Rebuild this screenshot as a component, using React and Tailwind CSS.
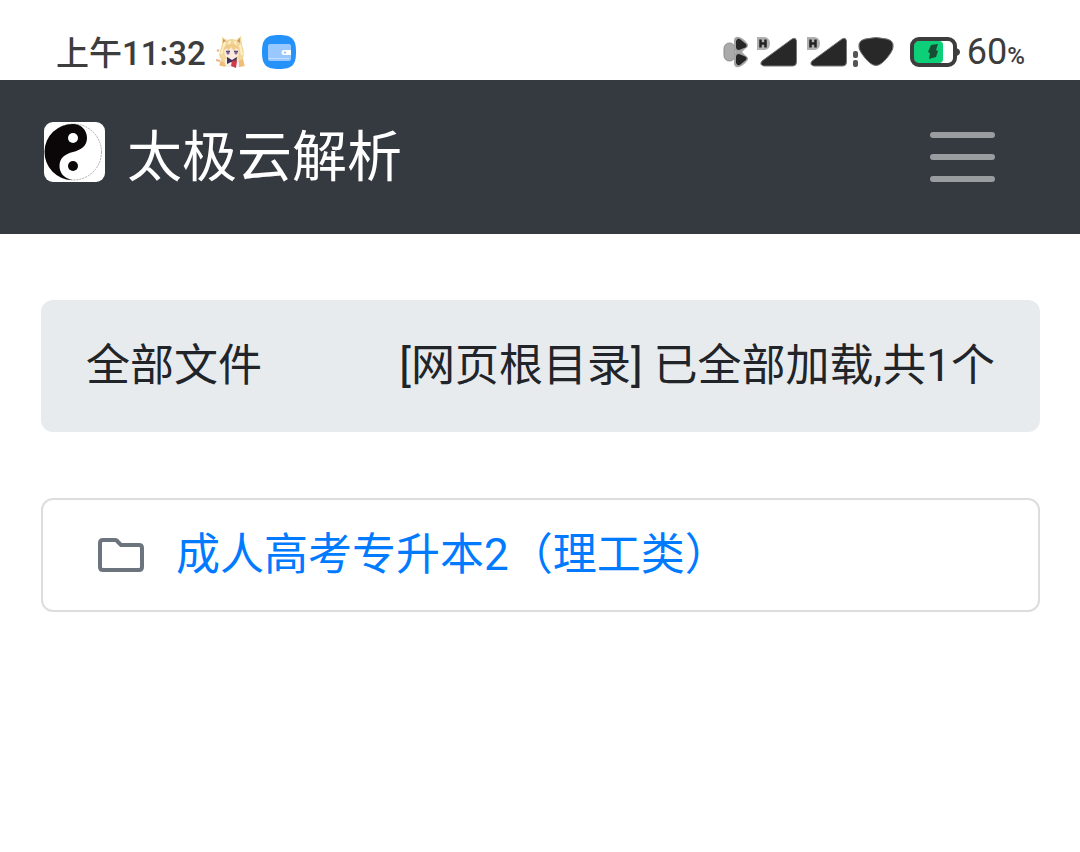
import { useState } from "react";

const files = [{ id: 1, name: "成人高考专升本2（理工类）" }];

function AvatarIcon() {
  return (
    <svg viewBox="0 0 30 34" className="w-[30px] h-[34px]" aria-hidden="true">
      <path d="M6 9 6 2 11 5Q16 3 20 5L25 1 26 10Q29 17 27 24L29 31 22 32 8 32 3 30 5 24Q2 22 4 16Z" fill="#f3d69c" />
      <path d="M7 8 7 4 10 6ZM24 8 24 3 21 6Z" fill="#c79a63" />
      <path d="M9 7Q8 13 5 19M14 6 12 12M19 6 20 12M24 10 26 20" stroke="#fff0c6" strokeWidth="2" fill="none" />
      <path d="M8 14Q15 10 23 14L22 21Q15 26 9 21Z" fill="#fdeade" />
      <path d="M7 16Q8 9 15 9Q22 8 24 16L20 13 18 16 15 12 12 16 11 13Z" fill="#f1cc88" />
      <path d="M10 16.5h4M18 16.5h4" stroke="#4d4168" strokeWidth="1.5" />
      <circle cx="12" cy="18" r="1.5" fill="#7c6b9c" />
      <circle cx="20" cy="18" r="1.5" fill="#7c6b9c" />
      <path d="M9 24 15 23 22 24 24 32 9 32Z" fill="#f5efef" />
      <path d="M11 22 16 25 21 22 20 29 15 27 11 29Z" fill="#3d315c" />
      <path d="M16 26 21 25 20 33 15 31Z" fill="#d03b49" />
      <path d="M1 15 3 16M0 25 4 26" stroke="#e6b48a" strokeWidth="2" />
      <path d="M4 27Q8 25 10 31L4 31ZM23 26 27 24 28 31 23 32Z" fill="#edbd79" />
    </svg>
  );
}

function WalletIcon() {
  return (
    <svg viewBox="0 0 34 34" className="w-[34px] h-[34px]" aria-hidden="true">
      <path d="M17 0C30 0 34 4 34 17S30 34 17 34 0 30 0 17 4 0 17 0Z" fill="#2492f8" />
      <rect x="6" y="9" width="23" height="17" rx="2" fill="#99c8ff" />
      <path d="M7 23.5h20" stroke="#c3dfff" strokeWidth="1" />
      <path d="M22 15h7v5h-7a2.5 2.5 0 0 1 0-5Z" fill="#fff" />
      <circle cx="23" cy="17.5" r="1" fill="#73b3f8" />
    </svg>
  );
}

function BluetoothIcon() {
  return (
    <svg viewBox="0 0 26 32" className="w-[26px] h-8" aria-hidden="true">
      <rect x="1" y="7" width="11" height="18" rx="5.5" fill="#aaa" stroke="#8c8c8c" />
      <path d="M11 4Q12 0 16 1Q20 2 24 7Q27 10 22 13L19 16 22 19Q27 22 24 25Q20 30 16 31Q12 32 11 28V19L13 16 11 13Z" fill="#a3a3a3" />
      <path d="M13 5Q15 1 18 4L23 8Q25 11 21 12L16 14Q13 14 13 11Z" fill="#262626" />
      <path d="M13 27Q15 31 18 28L23 24Q25 21 21 20L16 18Q13 18 13 21Z" fill="#262626" />
    </svg>
  );
}

function SignalIcon() {
  return (
    <svg viewBox="0 0 42 32" className="w-[42px] h-8" aria-hidden="true">
      <path d="M1 1h8q5 1 5 6.5t-5 6.5H1Z" fill="#b0b0b0" />
      <path d="M4.5 3.5v8M9.5 3.5v8M4.5 7.5h5" stroke="#222" strokeWidth="2.5" fill="none" />
      <path d="M36 3Q40 1 40.5 5V26Q40.5 30 37 30H8Q3 29 6 25Z" fill="#282828" stroke="#777" strokeWidth="1" />
    </svg>
  );
}

function WifiIcon() {
  return (
    <svg viewBox="0 0 42 32" className="w-[42px] h-8" aria-hidden="true">
      <rect x="1" y="15" width="5" height="7" rx="2" fill="#555" />
      <rect x="1" y="24" width="5" height="7" rx="2" fill="#555" />
      <path d="M7 8Q8 4 13 3Q24 0 35 3Q40 4 41 8Q42 13 38 18Q34 24 30 27Q24 32 18 27Q14 24 10 18Q6 13 7 8Z" fill="#282828" stroke="#777" strokeWidth="1" />
    </svg>
  );
}

function BatteryIcon() {
  return (
    <svg viewBox="0 0 50 30" className="w-[50px] h-[30px]" aria-hidden="true">
      <rect x="2" y="2" width="43" height="26" rx="7" fill="#fff" />
      <path d="M8 4H29Q33 4 33 8V22Q33 26 29 26H8Q4 26 4 22V8Q4 4 8 4Z" fill="#0ccf78" />
      <rect x="2" y="2" width="43" height="26" rx="7" fill="none" stroke="#3d3d3d" strokeWidth="4" />
      <path d="M46 11q4 1 4 4t-4 4Z" fill="#3d3d3d" />
      <path d="M21 8 28 7 26 13 28 14 26 20 19 22 20 16 18 15Z" fill="#174d35" />
    </svg>
  );
}

function TaijiLogo() {
  return (
    <svg viewBox="0 0 61 60" className="w-[61px] h-[60px]" aria-hidden="true">
      <rect width="61" height="60" rx="9" fill="#fff" />
      <circle cx="29.5" cy="30" r="28" fill="#fff" stroke="#777" strokeWidth="0.6" strokeDasharray="2 1" />
      <path d="M29 2A28 28 0 0 0 28 58C20 56 15.5 51 15.5 44C15.5 36 21 32 29 30C37 28 43 24 43 16C43 8 37 2 29 2Z" fill="#0b0708" />
      <circle cx="29" cy="16" r="5" fill="#fff" />
      <circle cx="29" cy="44" r="5" fill="#0b0708" />
    </svg>
  );
}

function StatusBar() {
  return (
    <div className="flex h-20 items-center justify-between pl-14 pr-[55px] pt-6 text-[#3d3d3d]">
      <div className="flex items-center">
        <span className="pt-1 text-[33px] font-medium leading-9">上午11:32</span>
        <span className="ml-[10px]">
          <AvatarIcon />
        </span>
        <span className="ml-4">
          <WalletIcon />
        </span>
      </div>
      <div className="flex items-center">
        <BluetoothIcon />
        <span className="ml-[7px] flex gap-2">
          <SignalIcon />
          <SignalIcon />
        </span>
        <span className="ml-1">
          <WifiIcon />
        </span>
        <span className="ml-4">
          <BatteryIcon />
        </span>
        <span className="ml-[7px] pt-1 text-4xl leading-9">
          60<span className="text-2xl font-medium leading-9">%</span>
        </span>
      </div>
    </div>
  );
}

function Navbar({ open, onToggle }) {
  return (
    <nav className="flex items-center justify-between bg-[#343a40] py-9 pl-11 pr-[85px]">
      <a href="#" className="flex items-center gap-[22px] text-[55px] leading-[82px] text-white">
        <span className="mb-[10px]">
          <TaijiLogo />
        </span>
        太极云解析
      </a>
      <button type="button" onClick={onToggle} aria-expanded={open} aria-label="菜单">
        <svg viewBox="0 0 66 50" className="w-[66px] h-[50px]" aria-hidden="true">
          <path d="M4 3h59M4 25h59M4 47h59" stroke="#999da0" strokeWidth="6" strokeLinecap="round" />
        </svg>
      </button>
    </nav>
  );
}

export default function App() {
  const [open, setOpen] = useState(false);

  return (
    <div className="min-h-screen bg-white font-[Roboto,'Noto_Sans_CJK_SC',sans-serif]" lang="zh-CN">
      <StatusBar />
      <Navbar open={open} onToggle={() => setOpen(!open)} />

      <main className="pl-[41px] pr-10 pt-[66px] text-[44px] leading-[66px] text-[#212529]">
        <div className="flex justify-between rounded-xl bg-[#e8ebee] px-[45px] py-[33px]">
          <span>全部文件</span>
          <span>[网页根目录] 已全部加载,共{files.length}个</span>
        </div>

        <ul className="mt-[66px] rounded-xl border-2 border-[#dcdddf]">
          {files.map((file) => (
            <li key={file.id} className="flex items-center px-[55px] py-[22px]">
              <svg viewBox="0 0 46 34" className="w-[46px] h-[34px]" aria-hidden="true">
                <path
                  d="M5 2H17Q19 2 20 4L23 7H41Q44 7 44 10V29Q44 32 41 32H5Q2 32 2 29V5Q2 2 5 2Z"
                  fill="none"
                  stroke="#6c757d"
                  strokeWidth="4"
                />
              </svg>
              <a href="#" className="ml-8 text-[#007bff]">
                {file.name}
              </a>
            </li>
          ))}
        </ul>
      </main>
    </div>
  );
}
